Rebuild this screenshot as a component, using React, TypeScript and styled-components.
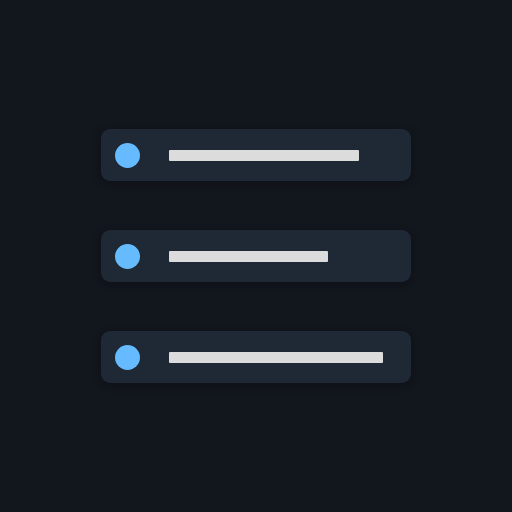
import React from "react";
import styled, { createGlobalStyle } from "styled-components";

const Global = createGlobalStyle`
  html, body { margin: 0; padding: 0; background: #12161d; }
  body { font-family: "Inter", "Liberation Sans", sans-serif; }
`;

const Page = styled.div`
  width: 512px;
  height: 512px;
  display: flex;
  flex-direction: column;
  align-items: center;
  justify-content: center;
  gap: 49px;
  background: #12161d;
`;

const Row = styled.div`
  box-sizing: border-box;
  width: 310px;
  height: 52px;
  display: flex;
  align-items: center;
  gap: 29px;
  padding-left: 14px;
  background: #1f2835;
  border-radius: 9px;
  box-shadow: 0 2px 8px rgba(0, 0, 0, 0.25);
`;

const Dot = styled.span`
  width: 25px;
  height: 25px;
  border-radius: 50%;
  background: #66bbff;
  flex: none;
`;

const Bar = styled.span<{ $w: number }>`
  width: ${(p) => p.$w}px;
  height: 11px;
  background: #dcdcdc;
  border-radius: 1px;
  flex: none;
`;

const widths = [190, 159, 214];

export default function App() {
  return (
    <>
      <Global />
      <Page>
        {widths.map((w, i) => (
          <Row key={i}>
            <Dot />
            <Bar $w={w} />
          </Row>
        ))}
      </Page>
    </>
  );
}
